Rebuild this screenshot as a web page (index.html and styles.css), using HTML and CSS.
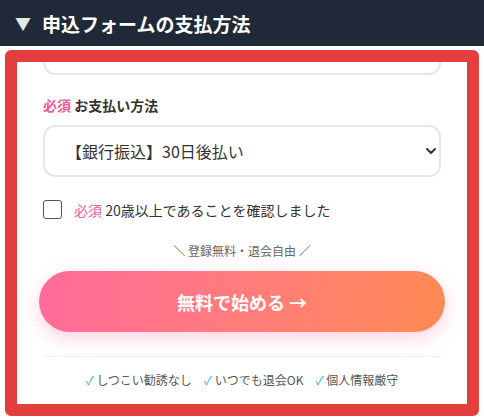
FILE: index.html
```html
<!DOCTYPE html>
<html lang="ja">
<head>
  <meta charset="UTF-8">
  <meta name="viewport" content="width=device-width, initial-scale=1.0">
  <title>申込フォーム</title>
  <link rel="stylesheet" href="styles.css">
</head>
<body>
  <div class="section-head">
    <span class="arrow">▼</span> 申込フォームの支払方法
  </div>

  <div class="frame">
    <div class="form-body">
      <input class="text-input prev" type="text">

      <label class="field-label"><span class="req">必須</span> お支払い方法</label>
      <div class="select-wrap">
        <select class="pay-select">
          <option>【銀行振込】30日後払い</option>
          <option>【クレジットカード】</option>
        </select>
        <svg class="chev" width="12" height="8" viewBox="0 0 12 8"><path d="M2 2l4 4 4-4" fill="none" stroke="#333" stroke-width="2" stroke-linecap="round" stroke-linejoin="round"/></svg>
      </div>

      <label class="check-row">
        <input type="checkbox" class="check">
        <span><span class="req light">必須</span> 20歳以上であることを確認しました</span>
      </label>

      <div class="note">＼ 登録無料・退会自由 ／</div>

      <button class="start-btn" type="button">無料で始める →</button>

      <div class="divider"></div>

      <div class="features">
        <span><i>✓</i> しつこい勧誘なし</span>
        <span><i>✓</i> いつでも退会OK</span>
        <span><i>✓</i> 個人情報厳守</span>
      </div>
    </div>
  </div>
</body>
</html>
```

FILE: styles.css
```css
* {
  box-sizing: border-box;
}
body {
  margin: 0;
  width: 484px;
  height: 420px;
  overflow: hidden;
  background: #fff;
  font-family: "Noto Sans CJK JP", "Noto Sans", sans-serif;
  color: #333;
}

.section-head {
  height: 46px;
  background: #1f2937;
  color: #fff;
  font-size: 19px;
  font-weight: 700;
  display: flex;
  align-items: center;
  padding-left: 15px;
  gap: 8px;
}

.section-head .arrow {
  font-size: 16px;
  color: #e5e7eb;
  margin-right: 3px;
}

.frame {
  margin: 4px 5px 0;
  border: 12px solid #e53e3e;
  border-radius: 6px;
  height: 366px;
  overflow: hidden;
}

.form-body {
  height: 100%;
  overflow: hidden;
  padding: 0 26px;
  display: flex;
  flex-direction: column;
}

.text-input {
  height: 52px;
  border: 2px solid #e5e7eb;
  border-radius: 12px;
  flex: none;
  width: 100%;
}

.prev {
  margin-top: -39px;
}

.field-label {
  margin-top: 21px;
  font-size: 14px;
  font-weight: 700;
  line-height: 18px;
}

.req {
  color: #ec5c95;
}

.req.light {
  font-weight: 400;
}

.select-wrap {
  position: relative;
  margin-top: 11px;
}

.pay-select {
  width: 100%;
  height: 52px;
  border: 2px solid #e5e7eb;
  border-radius: 12px;
  background: #fff;
  appearance: none;
  -webkit-appearance: none;
  font-family: inherit;
  font-size: 16px;
  color: #333;
  padding: 0 14px 0 21px;
}

.chev {
  position: absolute;
  right: 4px;
  top: 22px;
  pointer-events: none;
}

.check-row {
  display: flex;
  align-items: center;
  gap: 12px;
  margin-top: 23px;
  font-size: 14px;
  line-height: 18px;
}

.check {
  appearance: none;
  -webkit-appearance: none;
  width: 19px;
  height: 19px;
  margin: 0;
  border: 1.5px solid #555;
  border-radius: 3px;
  background: #fff;
}

.note {
  text-align: center;
  font-size: 12px;
  color: #666;
  margin-top: 23px;
  line-height: 18px;
}

.start-btn {
  margin: 11px -4px 0;
  height: 61px;
  flex: none;
  border: none;
  border-radius: 31px;
  background: linear-gradient(100deg, #ff6b9a 0%, #ff7c7c 50%, #ff8a52 100%);
  box-shadow: 0 6px 18px rgba(255, 107, 154, 0.3);
  color: #fff;
  font-family: inherit;
  font-size: 18px;
  font-weight: 700;
  cursor: pointer;
}

.divider {
  height: 1px;
  background: #f1f1f3;
  margin-top: 24px;
}

.features {
  display: flex;
  justify-content: center;
  gap: 12px;
  margin-top: 14px;
  font-size: 12px;
  color: #555;
}

.features i {
  font-style: normal;
  color: #2bbfc9;
}
```
